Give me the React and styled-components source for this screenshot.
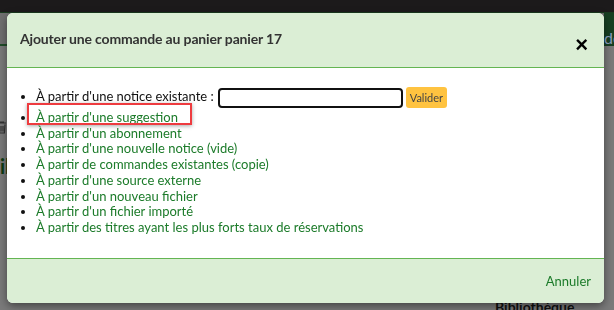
import styled, { createGlobalStyle } from "styled-components";

const GlobalStyle = createGlobalStyle`
  html, body {
    margin: 0;
    padding: 0;
    width: 614px;
    height: 310px;
    overflow: hidden;
    background: #737373;
    font-family: "Lato", "Liberation Sans", sans-serif;
  }
`;

const options = [
   "À partir d'une suggestion",
   "À partir d'un abonnement",
   "À partir d'une nouvelle notice (vide)",
   "À partir de commandes existantes (copie)",
   "À partir d'une source externe",
   "À partir d'un nouveau fichier",
   "À partir d'un fichier importé",
   "À partir des titres ayant les plus forts taux de réservations",
];

const App = () => {
   return (
      <>
         <GlobalStyle />
         <Page>
            <TopBar />
            <Banner>
               <BannerText>de</BannerText>
            </Banner>
            <PageBody>
               <Trash width="10" height="13" viewBox="0 0 10 13">
                  <path d="M1 2h8M3.5 2V1h3v1M2 3.5l.6 8.5h4.8L8 3.5M4 5v5.5M6 5v5.5" fill="none" stroke="#333" strokeWidth="1.2" />
               </Trash>
               <BigGreen>il</BigGreen>
               <Library>Bibliothèque</Library>
            </PageBody>
         </Page>
         <Modal>
            <Header>
               <Title>Ajouter une commande au panier panier 17</Title>
               <Close aria-label="Fermer">×</Close>
            </Header>
            <Body>
               <List>
                  <Item>
                     À partir d'une notice existante :
                     <Search type="text" />
                     <Valider>Valider</Valider>
                  </Item>
                  {options.map((label, i) => (
                     <Item key={label}>
                        <Link href="#" $marked={i === 0}>{label}</Link>
                     </Item>
                  ))}
               </List>
            </Body>
            <Footer>
               <Cancel href="#">Annuler</Cancel>
            </Footer>
         </Modal>
      </>
   );
};

const Page = styled.div`
   display: flex;
   flex-direction: column;
   height: 310px;
`;

const TopBar = styled.div`
   height: 12px;
   background: #1c1a1b;
`;

const Banner = styled.div`
   height: 31px;
   background: #6f6f6f;
   border-top: 1px solid #1a3a1f;
   border-bottom: 2px solid #1f4d28;
   display: flex;
   justify-content: flex-end;
   align-items: center;
`;

const BannerText = styled.span`
   width: 10px;
   height: 33px;
   margin-bottom: -2px;
   background: #173f22;
   color: #8aa0c0;
   font-size: 16px;
   line-height: 50px;
   overflow: hidden;
`;

const PageBody = styled.div`
   flex: 1;
   position: relative;
   background: #7a7a7a;
`;

const Trash = styled.svg`
   position: absolute;
   left: -3px;
   top: 75px;
`;

const BigGreen = styled.span`
   position: absolute;
   left: 0;
   top: 108px;
   color: #0d3a12;
   font-size: 20px;
   font-weight: 700;
`;

const Library = styled.span`
   position: absolute;
   left: 495px;
   top: 252px;
   color: #111;
   font-size: 14px;
   font-weight: 700;
`;

const Modal = styled.div`
   position: fixed;
   left: 7px;
   top: 13px;
   width: 597px;
   height: 290px;
   display: flex;
   flex-direction: column;
   background: #fff;
   border-radius: 6px;
   overflow: hidden;
   box-shadow: 0 3px 8px rgba(0, 0, 0, 0.45);
`;

const Header = styled.div`
   height: 54px;
   background: #dbeed5;
   border-bottom: 1px solid #64b552;
   display: flex;
   align-items: center;
   justify-content: space-between;
   padding: 0 16px 0 13px;
`;

const Title = styled.h2`
   margin: 0;
   font-size: 14px;
   font-weight: 700;
   color: #333;
   margin-top: -4px;
   letter-spacing: -0.15px;
`;

const Close = styled.button`
   border: 0;
   background: none;
   padding: 0;
   margin-top: 9px;
   font-size: 22px;
   font-weight: 700;
   line-height: 1;
   color: #000;
   font-family: "Liberation Sans", sans-serif;
`;

const Body = styled.div`
   flex: 1;
   padding: 19px 0 0 0;
`;

const List = styled.ul`
   margin: 0;
   padding-left: 29px;
   font-size: 13px;
   line-height: 15.7px;
   color: #111;
`;

const Item = styled.li`
   &:first-child {
      height: 23px;
   }
`;

const Search = styled.input`
   box-sizing: border-box;
   width: 185px;
   height: 20px;
   margin: 0 3px 0 4px;
   border: 2px solid #111;
   border-radius: 4px;
   vertical-align: middle;
`;

const Valider = styled.button`
   height: 21px;
   padding: 0 4px;
   border: 0;
   border-radius: 3px;
   background: #ffc340;
   color: #444;
   font-family: inherit;
   font-size: 11px;
   vertical-align: middle;
`;

const Link = styled.a`
   position: relative;
   color: #1c7b2a;
   text-decoration: none;

   ${(p) =>
      p.$marked &&
      `
      &::after {
         content: "";
         position: absolute;
         left: -9px;
         right: -14px;
         top: -6px;
         bottom: 0;
         border: 2px solid #ee3b3f;
         box-shadow: 0 1px 4px rgba(0, 0, 0, 0.35);
      }
   `}
`;

const Footer = styled.div`
   height: 44px;
   background: #dbeed5;
   border-top: 1px solid #64b552;
   display: flex;
   align-items: center;
   justify-content: flex-end;
   padding: 0 13px;
`;

const Cancel = styled.a`
   color: #1c7b2a;
   font-size: 13px;
   text-decoration: none;
`;

export default App;
